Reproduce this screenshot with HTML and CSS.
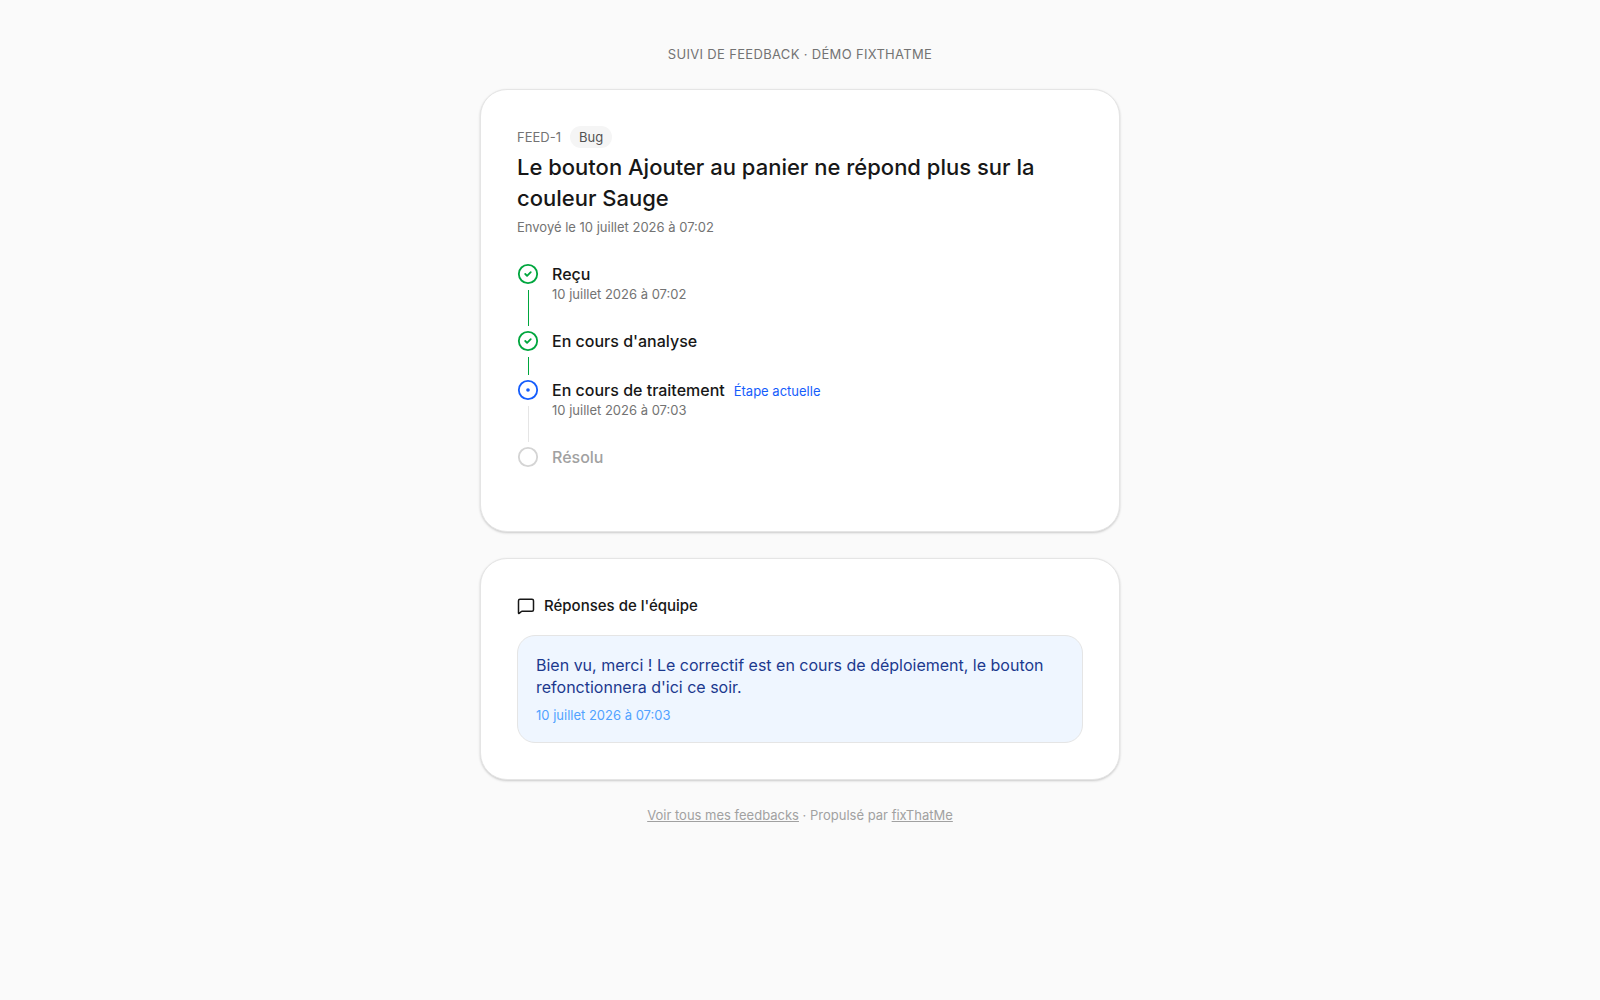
FILE: index.html
```html
<!DOCTYPE html>
<html lang="fr">
<head>
    <meta charset="UTF-8">
    <meta name="viewport" content="width=device-width, initial-scale=1.0">
    <title>Suivi de feedback - FEED-1</title>
    <link rel="stylesheet" href="styles.css">
</head>
<body>
    <div class="page">
        <header class="page-header">Suivi de feedback · Démo fixThatMe</header>

        <main class="page-content">
            <section class="card">
                <div class="ticket-meta">
                    <span>FEED-1</span>
                    <span class="badge">Bug</span>
                </div>
                <h1 class="ticket-title">Le bouton Ajouter au panier ne répond plus sur la couleur Sauge</h1>
                <p class="ticket-date">Envoyé le 10 juillet 2026 à 07:02</p>

                <ol class="timeline">
                    <li class="step step-done">
                        <div class="step-marker">
                            <svg class="step-icon" viewBox="0 0 24 24" aria-hidden="true">
                                <circle cx="12" cy="12" r="10"/>
                                <path d="m9 12 2 2 4-4"/>
                            </svg>
                            <span class="step-line"></span>
                        </div>
                        <div class="step-body">
                            <p class="step-label">Reçu</p>
                            <p class="step-date">10 juillet 2026 à 07:02</p>
                        </div>
                    </li>
                    <li class="step step-done">
                        <div class="step-marker">
                            <svg class="step-icon" viewBox="0 0 24 24" aria-hidden="true">
                                <circle cx="12" cy="12" r="10"/>
                                <path d="m9 12 2 2 4-4"/>
                            </svg>
                            <span class="step-line"></span>
                        </div>
                        <div class="step-body">
                            <p class="step-label">En cours d'analyse</p>
                        </div>
                    </li>
                    <li class="step step-current">
                        <div class="step-marker">
                            <svg class="step-icon" viewBox="0 0 24 24" aria-hidden="true">
                                <circle cx="12" cy="12" r="10"/>
                                <circle cx="12" cy="12" r="1"/>
                            </svg>
                            <span class="step-line"></span>
                        </div>
                        <div class="step-body">
                            <p class="step-label">En cours de traitement <span class="step-now">Étape actuelle</span></p>
                            <p class="step-date">10 juillet 2026 à 07:03</p>
                        </div>
                    </li>
                    <li class="step step-pending">
                        <div class="step-marker">
                            <svg class="step-icon" viewBox="0 0 24 24" aria-hidden="true">
                                <circle cx="12" cy="12" r="10"/>
                            </svg>
                        </div>
                        <div class="step-body">
                            <p class="step-label">Résolu</p>
                        </div>
                    </li>
                </ol>
            </section>

            <section class="card">
                <h2 class="replies-title">
                    <svg class="replies-icon" viewBox="0 0 24 24" aria-hidden="true">
                        <path d="M22 17a2 2 0 0 1-2 2H6.828a2 2 0 0 0-1.414.586l-2.202 2.202A.71.71 0 0 1 2 21.286V5a2 2 0 0 1 2-2h16a2 2 0 0 1 2 2z"/>
                    </svg>
                    Réponses de l'équipe
                </h2>
                <article class="reply">
                    <p class="reply-text">Bien vu, merci ! Le correctif est en cours de déploiement, le bouton refonctionnera d'ici ce soir.</p>
                    <p class="reply-date">10 juillet 2026 à 07:03</p>
                </article>
            </section>
        </main>

        <footer class="page-footer">
            <a href="#">Voir tous mes feedbacks</a> · Propulsé par <a href="#">fixThatMe</a>
        </footer>
    </div>
</body>
</html>
```
FILE: styles.css
```css
* {
    box-sizing: border-box;
    margin: 0;
    padding: 0;
}

body {
    min-height: 100vh;
    background: #fafafa;
    color: #171717;
    font-family: 'Inter', sans-serif;
    font-size: 16px;
    line-height: 22px;
}

.page {
    max-width: 640px;
    margin: 0 auto;
    padding: 45px 0;
    display: flex;
    flex-direction: column;
    gap: 26px;
}

.page-header {
    text-align: center;
    text-transform: uppercase;
    letter-spacing: 0.025em;
    font-size: 13px;
    line-height: 18px;
    color: #737373;
}

.page-content {
    display: flex;
    flex-direction: column;
    gap: 26px;
}

.card {
    background: #fff;
    border: 1px solid #e5e5e5;
    border-radius: 27px;
    padding: 36px;
    box-shadow: 0 1px 3px rgba(0, 0, 0, 0.1), 0 1px 2px rgba(0, 0, 0, 0.1);
}

.ticket-meta {
    display: flex;
    align-items: center;
    gap: 9px;
    font-size: 13px;
    color: #737373;
}

.badge {
    padding: 0 9px;
    border-radius: 11px;
    background: #f5f5f5;
    color: #525252;
}

.ticket-title {
    margin-top: 4px;
    font-size: 22px;
    font-weight: 500;
    line-height: 31px;
}

.ticket-date {
    margin-top: 4px;
    font-size: 13px;
    line-height: 18px;
    color: #737373;
}

.timeline {
    margin-top: 27px;
    list-style: none;
}

.step {
    display: flex;
    gap: 13px;
}

.step-marker {
    display: flex;
    flex-direction: column;
    align-items: center;
    gap: 5px;
    padding-bottom: 4px;
}

.step-icon {
    width: 22px;
    height: 22px;
    fill: none;
    stroke: currentColor;
    stroke-width: 2;
    stroke-linecap: round;
    stroke-linejoin: round;
}

.step-line {
    flex: 1;
    width: 1px;
    background: #e5e5e5;
}

.step-body {
    padding-bottom: 27px;
}

.step-label {
    display: flex;
    align-items: baseline;
    gap: 9px;
    font-weight: 500;
}

.step-date {
    font-size: 13px;
    line-height: 18px;
    color: #737373;
}

.step-now {
    font-size: 13px;
    font-weight: 400;
    line-height: 18px;
    color: #155dfc;
}

.step-done .step-icon {
    color: #00a63e;
}

.step-done .step-line {
    background: #00a63e;
}

.step-current .step-icon {
    color: #155dfc;
}

.step-pending .step-icon {
    color: #d4d4d4;
}

.step-pending .step-label {
    color: #a1a1a1;
}

.replies-title {
    display: flex;
    align-items: center;
    gap: 9px;
    font-size: 15px;
    font-weight: 500;
}

.replies-icon {
    width: 18px;
    height: 18px;
    fill: none;
    stroke: currentColor;
    stroke-width: 2;
    stroke-linecap: round;
    stroke-linejoin: round;
}

.reply {
    margin-top: 18px;
    padding: 18px;
    border: 1px solid #e5e5e5;
    border-radius: 18px;
    background: #eff6ff;
}

.reply-text {
    color: #1c398e;
}

.reply-date {
    margin-top: 8px;
    font-size: 13px;
    line-height: 18px;
    color: #51a2ff;
}

.page-footer {
    text-align: center;
    font-size: 13px;
    line-height: 18px;
    color: #a1a1a1;
}

.page-footer a {
    color: inherit;
}
```
